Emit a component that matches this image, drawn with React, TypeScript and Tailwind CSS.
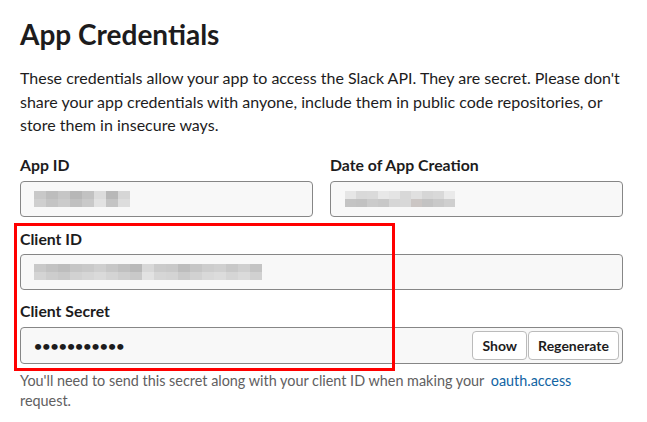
import React from "react";

const BlurRow = ({ top, bottom, cell = 12 }: { top: string[]; bottom: string[]; cell?: number }) => (
  <div className="flex flex-col">
    <div className="flex">
      {top.map((c, i) => (
        <div key={i} style={{ background: c, width: cell, height: 8 }} />
      ))}
    </div>
    <div className="flex">
      {bottom.map((c, i) => (
        <div key={i} style={{ background: c, width: cell, height: 8 }} />
      ))}
    </div>
  </div>
);

const inputCls =
  "h-[36px] rounded-[4px] border border-[#868686] bg-[#f8f8f8] flex items-center";

export default function App() {
  return (
    <div
      className="relative w-[647px] h-[422px] bg-white text-[#1d1c1d] overflow-hidden"
      style={{ fontFamily: "Lato, 'Noto Sans', sans-serif" }}
    >
      <div className="pl-[20px] pr-[20px] pt-[16px]">
        <h1 className="text-[28px] leading-[36px] font-bold">App Credentials</h1>
        <p className="mt-[14px] text-[16px] leading-[23.5px] text-[#1d1c1d]">
          These credentials allow your app to access the Slack API. They are secret. Please don't share your app
          credentials with anyone, include them in public code repositories, or store them in insecure ways.
        </p>

        <div className="pr-[4px]">
          <div className="mt-[17px] grid grid-cols-2 gap-x-[17px]">
            <div>
              <div className="text-[15.8px] leading-[22px] font-bold">App ID</div>
              <div className={`mt-[5px] ${inputCls} pl-[13px]`}>
                <BlurRow
                  top={["#c8c8c8", "#bdbdbd", "#c6c6c6", "#b7b7b7", "#c2c2c2", "#dcdcdc", "#b8b8b8", "#d6d6d6"]}
                  bottom={["#cfcfcf", "#c4c4c4", "#cbcbcb", "#c0c0c0", "#c9c9c9", "#e2e2e2", "#c4c4c4", "#dddddd"]}
                />
              </div>
            </div>
            <div>
              <div className="text-[15.8px] leading-[22px] font-bold">Date of App Creation</div>
              <div className={`mt-[5px] ${inputCls} pl-[14px]`}>
                <BlurRow
                  cell={11}
                  top={["#e6e6e6", "#d9d9d9", "#dadada", "#e8e8e8", "#e4e4e4", "#d8d8d8", "#e0e0e0", "#d6d6d6", "#d9d9d9", "#eaeaea"]}
                  bottom={["#c4c4c4", "#c2c2c2", "#cbcbcb", "#c8c8c8", "#d6d6d6", "#d8d8d8", "#cbc6c4", "#c3c3c3", "#c9c9c9", "#cfcfcf"]}
                />
              </div>
            </div>
          </div>

          <div className="mt-[11px] text-[15.8px] leading-[22px] font-bold">Client ID</div>
          <div className={`mt-[4px] ${inputCls} pl-[13px]`}>
            <BlurRow
              top={[
                "#c9c9c9", "#c2c2c2", "#bdbdbd", "#c6c6c6", "#c9c9c9", "#cfcfcf", "#c7c7c7", "#c0c0c0", "#b9b9b9", "#d8d8d8",
                "#cbcbcb", "#c9c9c9", "#bdbdbd", "#c6c6c6", "#cdcdcd", "#d0d0d0", "#c8c8c8", "#cfcfcf", "#c4c4c4",
              ]}
              bottom={[
                "#d4d4d4", "#cdcdcd", "#c9c9c9", "#d2d2d2", "#d6d6d6", "#dadada", "#d4d4d4", "#cecece", "#c9c9c9", "#e2e2e2",
                "#d6d6d6", "#d4d4d4", "#cbcbcb", "#d2d2d2", "#d9d9d9", "#dcdcdc", "#d5d5d5", "#dadada", "#d1d1d1",
              ]}
            />
          </div>

          <div className="mt-[10px] text-[15.8px] leading-[22px] font-bold">Client Secret</div>
          <div className={`mt-[5px] ${inputCls} h-[37px] pl-[13px] pr-[3px] justify-between`}>
            <span className="text-[14px] font-bold tracking-[0.1px] text-[#1d1c1d]">•••••••••••</span>
            <div className="flex">
              <button className="h-[29px] px-[9px] rounded-[4px] border border-[#bbbbbb] bg-white text-[14px] font-bold text-[#1d1c1d]">
                Show
              </button>
              <button className="ml-[1px] h-[29px] px-[9px] rounded-[4px] border border-[#bbbbbb] bg-white text-[14px] font-bold text-[#1d1c1d]">
                Regenerate
              </button>
            </div>
          </div>

          <p className="mt-[7px] text-[14.4px] leading-[20px] text-[#616061]">
            You'll need to send this secret along with your client ID when making your{" "}
            <span className="ml-[3px] text-[#1264a3]">oauth.access</span> request.
          </p>
        </div>
      </div>

      <div className="absolute left-[14px] top-[223px] w-[381px] h-[148px] border-[3px] border-[#ff0000]" />
    </div>
  );
}
